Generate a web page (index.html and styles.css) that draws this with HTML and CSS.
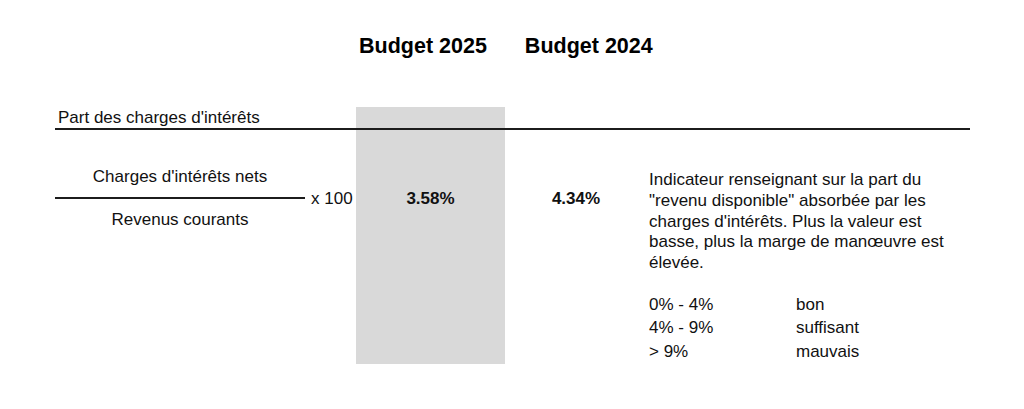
FILE: index.html
```html
<!DOCTYPE html>
<html lang="fr">
<head>
<meta charset="utf-8">
<title>Part des charges d'intérêts</title>
<link rel="stylesheet" href="styles.css">
</head>
<body>
<div class="page">
  <div class="years">
    <div class="year">Budget 2025</div>
    <div class="year">Budget 2024</div>
  </div>
  <div class="sheet">
    <div class="shade"></div>
    <div class="title">Part des charges d'intérêts</div>
    <div class="rule"></div>
    <div class="formula">
      <div class="fraction">
        <div class="num">Charges d'intérêts nets</div>
        <div class="bar"></div>
        <div class="den">Revenus courants</div>
      </div>
      <div class="times">x 100</div>
    </div>
    <div class="value v2025">3.58%</div>
    <div class="value v2024">4.34%</div>
    <div class="desc">
      <p class="text">Indicateur renseignant sur la part du "revenu disponible" absorbée par les charges d'intérêts. Plus la valeur est basse, plus la marge de manœuvre est élevée.</p>
      <div class="scale">
        <span>0% - 4%</span><span>bon</span>
        <span>4% - 9%</span><span>suffisant</span>
        <span>&gt; 9%</span><span>mauvais</span>
      </div>
    </div>
  </div>
</div>
</body>
</html>
```
FILE: styles.css
```css
* { box-sizing: border-box; }
html, body {
  margin: 0;
  padding: 0;
  background: #ffffff;
}
body {
  font-family: "Liberation Sans", Arial, Helvetica, sans-serif;
  color: #111111;
  font-size: 17px;
}
.page {
  width: 1024px;
  height: 409px;
  overflow: hidden;
}
.years {
  display: flex;
  gap: 38px;
  padding-top: 34px;
  padding-left: 359px;
}
.year {
  font-weight: bold;
  font-size: 21.5px;
  line-height: 25px;
  color: #000;
}
.sheet {
  margin-top: 48px;
  margin-left: 55px;
  display: grid;
  grid-template-columns: 301px 149px 142px 323px;
  grid-template-rows: 21px 2px 234px;
}
.shade {
  grid-column: 2;
  grid-row: 1 / 4;
  background: #d9d9d9;
}
.title {
  grid-column: 1 / 3;
  grid-row: 1;
  padding-left: 3px;
  line-height: 21px;
}
.rule {
  grid-column: 1 / 5;
  grid-row: 2;
  background: #1c1c1c;
}
.formula {
  grid-column: 1 / 3;
  grid-row: 3;
  padding-top: 37px;
  display: flex;
  align-items: center;
  gap: 6px;
  align-self: start;
}
.fraction {
  width: 250px;
  text-align: center;
  line-height: 20px;
}
.num { margin-bottom: 10px; }
.bar {
  height: 2px;
  background: #1c1c1c;
}
.den { margin-top: 11px; }
.times { line-height: 20px; }
.value {
  grid-row: 3;
  padding-top: 59px;
  text-align: center;
  font-weight: bold;
  line-height: 20px;
}
.v2025 { grid-column: 2; }
.v2024 { grid-column: 3; }
.desc {
  grid-column: 4;
  grid-row: 3;
  padding-top: 40px;
  padding-left: 2px;
}
.text {
  margin: 0;
  line-height: 20.75px;
}
.scale {
  margin-top: 19px;
  display: grid;
  grid-template-columns: 147px auto;
  line-height: 23.6px;
}
```
